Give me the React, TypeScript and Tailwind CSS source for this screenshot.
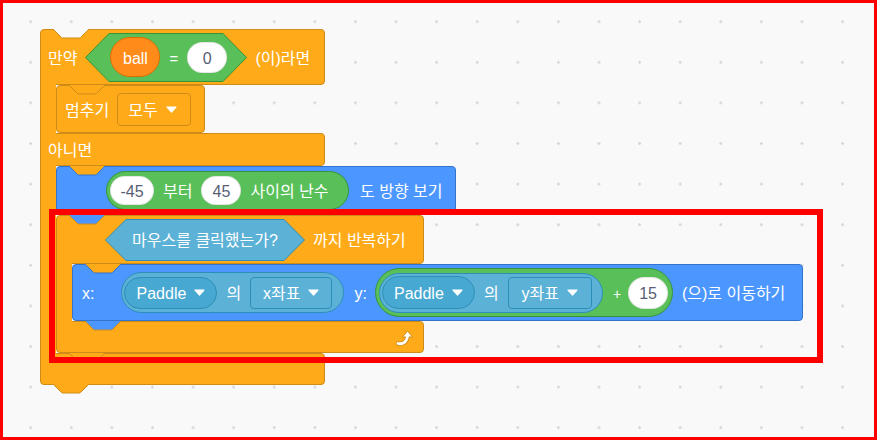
import type { ReactNode } from 'react'

// block label, nudged down a little to sit where Scratch puts its text
function T({ className = '', children }: { className?: string; children: ReactNode }) {
  return <span className={`relative top-[1.5px] ${className}`}>{children}</span>
}

// notch / tab trapezoid — fill is the colour of the block above, stroke is the outline of the block it cuts into
function Notch({ fill, stroke, className = '' }: { fill: string; stroke: string; className?: string }) {
  return (
    <svg width="34" height="10" viewBox="0 0 34 10" className={`pointer-events-none absolute z-10 ${className}`}>
      <path d="M0 0 H34 V1.5 L26.5 8.5 Q26 9 25 9 H9 Q8 9 7.5 8.5 L0 1.5 Z" fill={fill} />
      <path d="M0 1 L7.5 8.5 Q8 9 9 9 H25 Q26 9 26.5 8.5 L34 1" fill="none" stroke={stroke} />
    </svg>
  )
}

function Tri({ className = '' }: { className?: string }) {
  return (
    <svg width="11" height="7" viewBox="0 0 11 7" className={`shrink-0 ${className}`}>
      <path d="M1 1 H10 L5.5 6 Z" fill="white" stroke="white" strokeWidth="1.2" strokeLinejoin="round" />
    </svg>
  )
}

function Hex({
  w,
  h,
  indent,
  fill,
  stroke,
  size,
  inner = '',
  children,
}: {
  w: number
  h: number
  indent: number
  fill: string
  stroke: string
  size: string
  inner?: string
  children: ReactNode
}) {
  const d = `M${indent} 0.5 H${w - indent} L${w - 0.5} ${h / 2} L${w - indent} ${h - 0.5} H${indent} L0.5 ${h / 2} Z`
  return (
    <div className={`relative shrink-0 ${size}`}>
      <svg width={w} height={h} className="absolute left-0 top-0">
        <path d={d} fill={fill} stroke={stroke} strokeLinejoin="round" />
      </svg>
      <div className={`relative flex h-full w-full items-center ${inner}`}>{children}</div>
    </div>
  )
}

function Num({ className = '', children }: { className?: string; children: ReactNode }) {
  return (
    <div className={`flex shrink-0 items-center justify-center rounded-full border border-black/10 bg-white text-[#575E75] ${className}`}>
      <T>{children}</T>
    </div>
  )
}

function Column() {
  return <div className="relative z-[5] -my-px w-[16px] shrink-0 border-l border-[#CF8B17] bg-[#FFAB19]" />
}

function OfBlock({ size, pill, prop, box }: { size: string; pill: string; prop: string; box: string }) {
  return (
    <div className={`flex shrink-0 items-center gap-[9px] rounded-full border border-[#2E8EB8] bg-[#5CB1D6] pl-[2px] ${size}`}>
      <div className={`flex w-[93px] items-center justify-center gap-2 rounded-full border border-[#2E8EB8] bg-[#47A8D1] ${pill}`}>
        <T>Paddle</T>
        <Tri />
      </div>
      <T>의</T>
      <div className={`flex h-[32px] items-center justify-center gap-2 rounded-[4px] border border-[#2E8EB8] bg-[#5CB1D6] ${box}`}>
        <T>{prop}</T>
        <Tri />
      </div>
    </div>
  )
}

function RepeatIcon() {
  return (
    <svg width="18" height="17" viewBox="0 0 18 17">
      <path d="M2 14.5 C7 15.5 11 13 11.5 7" fill="none" stroke="#CF8B17" strokeWidth="4.5" strokeLinecap="round" />
      <path d="M6.5 8 L11.5 2 L16.5 8 Z" fill="white" stroke="#CF8B17" strokeWidth="1" strokeLinejoin="round" />
      <path d="M2 14.5 C7 15.5 11 13 11.5 7" fill="none" stroke="white" strokeWidth="2.8" strokeLinecap="round" />
    </svg>
  )
}

function StopBlock() {
  return (
    <div className="relative flex h-[48px] w-[149px] items-center gap-2 rounded-[4px] border border-[#CF8B17] bg-[#FFAB19] pl-[8px]">
      <Notch fill="#FFAB19" stroke="#CF8B17" className="left-[13px] top-[-1px]" />
      <T>멈추기</T>
      <div className="flex h-[33px] w-[74px] items-center gap-2 rounded-[4px] border border-[#CF8B17] pl-[10px]">
        <T>모두</T>
        <Tri />
      </div>
    </div>
  )
}

function PointBlock() {
  return (
    <div className="relative flex h-[49px] w-[400px] items-center rounded-[4px] border border-[#3373CC] bg-[#4C97FF] pl-[49px]">
      <Notch fill="#FFAB19" stroke="#3373CC" className="left-[13px] top-[-1px]" />
      <div className="flex h-[39px] w-[243px] items-center gap-[9px] rounded-full border border-[#389438] bg-[#59C059] pl-[3px]">
        <Num className="h-[29px] w-[44px]">-45</Num>
        <T>부터</T>
        <Num className="h-[29px] w-[40px]">45</Num>
        <T>사이의 난수</T>
      </div>
      <T className="ml-[11px]">도 방향 보기</T>
    </div>
  )
}

function MoveBlock() {
  return (
    <div className="relative flex h-[57px] w-[731px] items-center rounded-[4px] border border-[#3373CC] bg-[#4C97FF] pl-[9px]">
      <Notch fill="#FFAB19" stroke="#3373CC" className="left-[13px] top-[-1px]" />
      <T>x:</T>
      <div className="ml-[27px]">
        <OfBlock size="h-[41px] w-[223px]" pill="h-[32px]" prop="x좌표" box="w-[82px]" />
      </div>
      <T className="ml-[10px]">y:</T>
      <div className="ml-[8px] flex h-[49px] w-[298px] items-center rounded-full border border-[#389438] bg-[#59C059] pl-[3px]">
        <OfBlock size="h-[40px] w-[224px]" pill="h-[33px]" prop="y좌표" box="w-[84px]" />
        <T className="ml-[10px] text-[14px]">+</T>
        <Num className="ml-[7px] h-[32px] w-[40px]">15</Num>
      </div>
      <T className="ml-[9px]">(으)로 이동하기</T>
    </div>
  )
}

function Repeat() {
  return (
    <div className="flex flex-col items-start">
      <div className="relative flex h-[49px] w-[368px] items-center gap-2 rounded-[4px] rounded-bl-none border border-[#CF8B17] bg-[#FFAB19] pl-[48px]">
        <Notch fill="#4C97FF" stroke="#CF8B17" className="left-[13px] top-[-1px]" />
        <Hex w={200} h={42} indent={21} fill="#5CB1D6" stroke="#2E8EB8" size="h-[42px] w-[200px]" inner="justify-center">
          <T>마우스를 클릭했는가?</T>
        </Hex>
        <T>까지 반복하기</T>
      </div>
      <div className="flex items-stretch">
        <Column />
        <MoveBlock />
      </div>
      <div className="relative flex h-[32px] w-[368px] items-center justify-end rounded-[4px] rounded-tl-none border border-[#CF8B17] bg-[#FFAB19] pr-[9px]">
        <Notch fill="#4C97FF" stroke="#CF8B17" className="left-[29px] top-[-1px]" />
        <RepeatIcon />
      </div>
    </div>
  )
}

function IfElse() {
  return (
    <div className="flex flex-col items-start">
      {/* 만약 ... (이)라면 */}
      <div className="relative flex h-[56px] w-[285px] items-center gap-2 rounded-[4px] rounded-bl-none border border-[#CF8B17] bg-[#FFAB19] pl-[7px]">
        <Notch fill="#f9f9f9" stroke="#CF8B17" className="left-[13px] top-[-1px]" />
        <T>만약</T>
        <Hex w={162} h={49} indent={24} fill="#59C059" stroke="#389438" size="h-[49px] w-[162px]" inner="gap-[9px] pl-[25px]">
          <div className="flex h-[40px] w-[50px] shrink-0 items-center justify-center rounded-full border border-[#DB6E00] bg-[#FF8C1A]">
            <T>ball</T>
          </div>
          <T className="text-[15px]">=</T>
          <Num className="h-[31px] w-[40px]">0</Num>
        </Hex>
        <T>(이)라면</T>
      </div>
      <div className="flex items-stretch">
        <Column />
        <div className="flex flex-col items-start">
          <StopBlock />
        </div>
      </div>
      {/* 아니면 */}
      <div className="relative flex h-[33px] w-[285px] items-center rounded-[4px] rounded-l-none border border-[#CF8B17] bg-[#FFAB19] pl-[7px]">
        <T>아니면</T>
      </div>
      <div className="flex items-stretch">
        <Column />
        <div className="flex flex-col items-start">
          <PointBlock />
          <Repeat />
        </div>
      </div>
      <div className="relative h-[32px] w-[285px] rounded-[4px] rounded-tl-none border border-[#CF8B17] bg-[#FFAB19]">
        <Notch fill="#FFAB19" stroke="#CF8B17" className="left-[29px] top-[-1px]" />
        <Notch fill="#FFAB19" stroke="#CF8B17" className="left-[13px] top-full" />
      </div>
    </div>
  )
}

export default function App() {
  return (
    <div className="relative h-[440px] w-[877px] overflow-hidden border-[3px] border-[#ff0000] bg-[#f9f9f9] font-['Liberation_Sans','Noto_Sans_CJK_KR',sans-serif] text-[16px] leading-none text-white [background-image:radial-gradient(circle,#d6d6d6_1px,transparent_1.6px)] [background-position:7.4px_-1.6px] [background-size:40.6px_40.6px]">
      <div className="pl-[37px] pt-[26px]">
        <IfElse />
      </div>
      {/* highlight box over the repeat block */}
      <div className="pointer-events-none absolute left-[46px] top-[206px] z-30 h-[154px] w-[774px] border-[6px] border-[#ff0000]" />
    </div>
  )
}
